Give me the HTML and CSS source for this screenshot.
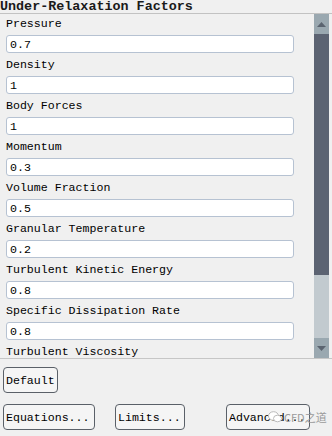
FILE: index.html
```html
<!DOCTYPE html>
<html lang="en">
<head>
    <meta charset="UTF-8">
    <meta name="viewport" content="width=device-width, initial-scale=1.0">
    <title>Under-Relaxation Factors</title>
    <link rel="stylesheet" href="styles.css">
</head>
<body>
<div class="title">Under-Relaxation Factors</div>
<div class="panel">
    <div class="fields">
        <div class="field"><div class="label">Pressure</div><input class="box" type="text" value="0.7"></div>
        <div class="field"><div class="label">Density</div><input class="box" type="text" value="1"></div>
        <div class="field"><div class="label">Body Forces</div><input class="box" type="text" value="1"></div>
        <div class="field"><div class="label">Momentum</div><input class="box" type="text" value="0.3"></div>
        <div class="field"><div class="label">Volume Fraction</div><input class="box" type="text" value="0.5"></div>
        <div class="field"><div class="label">Granular Temperature</div><input class="box" type="text" value="0.2"></div>
        <div class="field"><div class="label">Turbulent Kinetic Energy</div><input class="box" type="text" value="0.8"></div>
        <div class="field"><div class="label">Specific Dissipation Rate</div><input class="box" type="text" value="0.8"></div>
        <div class="field"><div class="label">Turbulent Viscosity</div><input class="box" type="text" value="1"></div>
    </div>
    <div class="scrollbar">
        <div class="arrow"><svg width="9" height="5" viewBox="0 0 9 5"><polygon points="0,5 9,5 4.5,0" fill="#5b6470"/></svg></div>
        <div class="thumb"></div>
        <div class="track"></div>
        <div class="arrow"><svg width="9" height="5" viewBox="0 0 9 5"><polygon points="0,0 9,0 4.5,5" fill="#5b6470"/></svg></div>
    </div>
</div>
<div class="actions">
    <button class="btn">Default</button>
</div>
<div class="actions bottom">
    <button class="btn equations">Equations...</button>
    <button class="btn limits">Limits...</button>
    <button class="btn advanced">Advanced...</button>
</div>
<div class="watermark">
    <svg width="14" height="12" viewBox="0 0 14 12"><ellipse cx="5.5" cy="5" rx="5" ry="4.3" fill="#fff" stroke="#bbb"/><ellipse cx="9.5" cy="7.5" rx="4" ry="3.3" fill="#fff" stroke="#bbb"/></svg>
    <span>CFD之道</span>
</div>
</body>
</html>
```
FILE: styles.css
```css
body {
    margin: 0;
    padding: 0;
    background-color: #f0f0f0;
    font-family: "Liberation Mono", "Courier New", monospace;
    font-size: 11.6px;
    color: #000;
    position: relative;
    width: 332px;
    height: 436px;
    overflow: hidden;
}

.title {
    height: 13px;
    line-height: 13px;
    font-size: 13.4px;
    font-weight: bold;
    color: #1a1a1a;
    border-bottom: 1px solid #c2c2c2;
    white-space: nowrap;
}

.panel {
    display: flex;
    height: 344px;
    border-bottom: 1px solid #c6c6c6;
}

.fields {
    flex: 1;
    overflow: hidden;
    padding: 2px 0 0 6px;
}

.field {
    margin-bottom: 4px;
}

.label {
    height: 16px;
    line-height: 16px;
    margin-bottom: 3px;
    white-space: nowrap;
}

.box {
    display: block;
    box-sizing: border-box;
    width: 288px;
    height: 18px;
    margin: 0;
    padding: 0 0 0 3px;
    border: 1px solid #b6c2d2;
    border-radius: 3px;
    background: #fff;
    font-family: inherit;
    font-size: inherit;
    color: #000;
}

.scrollbar {
    width: 15px;
    margin-right: 3px;
    display: flex;
    flex-direction: column;
    background: #c2cacf;
}

.arrow {
    height: 20px;
    background: #9aa8b0;
    display: flex;
    align-items: center;
    justify-content: center;
}

.thumb {
    height: 241px;
    background: #5c6372;
}

.track {
    flex: 1;
}

.actions {
    display: flex;
    padding: 8px 0 0 3px;
}

.actions.bottom {
    padding-top: 11px;
}

.btn {
    box-sizing: border-box;
    height: 26px;
    margin: 0;
    padding: 0 2px;
    border: 1px solid #5a6068;
    border-radius: 4px;
    background: #f5f5f5;
    font-family: inherit;
    font-size: 11.6px;
    color: #000;
    text-align: left;
}

.equations {
    width: 92px;
}

.limits {
    width: 70px;
    margin-left: 20px;
}

.advanced {
    width: 84px;
    margin-left: 41px;
}

.watermark {
    position: absolute;
    left: 268px;
    top: 409px;
    display: flex;
    align-items: center;
    gap: 2px;
    color: #9a9a9a;
    font-family: "Noto Sans CJK SC", sans-serif;
    font-size: 11px;
}
```
